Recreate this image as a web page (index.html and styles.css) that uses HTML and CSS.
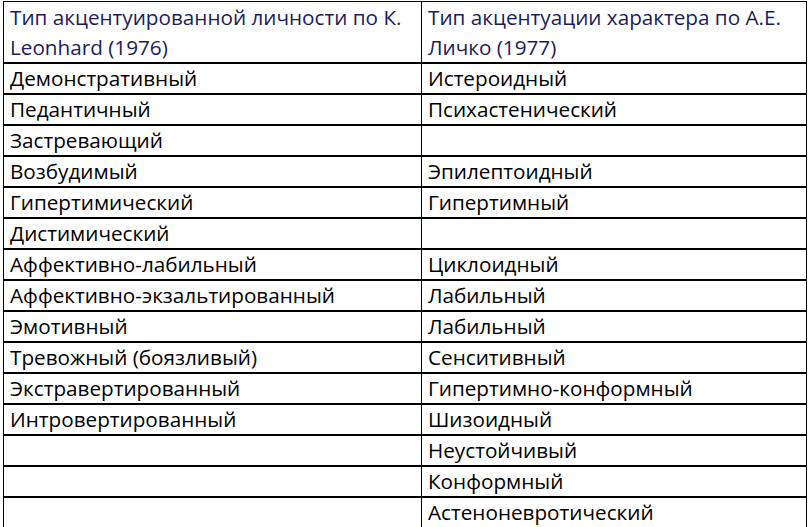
FILE: index.html
```html
<!DOCTYPE html>
<html lang="ru">
<head>
<meta charset="utf-8">
<link rel="stylesheet" href="styles.css">
</head>
<body>
<table class="types">
  <thead>
    <tr class="head">
      <th class="left">Тип акцентуированной личности по К. Leonhard (1976)</th>
      <th class="right">Тип акцентуации характера по А.Е. Личко (1977)</th>
    </tr>
  </thead>
  <tbody>
    <tr><td>Демонстративный</td><td>Истероидный</td></tr>
    <tr><td>Педантичный</td><td>Психастенический</td></tr>
    <tr><td>Застревающий</td><td></td></tr>
    <tr><td>Возбудимый</td><td>Эпилептоидный</td></tr>
    <tr><td>Гипертимический</td><td>Гипертимный</td></tr>
    <tr><td>Дистимический</td><td></td></tr>
    <tr><td>Аффективно-лабильный</td><td>Циклоидный</td></tr>
    <tr><td>Аффективно-экзальтированный</td><td>Лабильный</td></tr>
    <tr><td>Эмотивный</td><td>Лабильный</td></tr>
    <tr><td>Тревожный (боязливый)</td><td>Сенситивный</td></tr>
    <tr><td>Экстравертированный</td><td>Гипертимно-конформный</td></tr>
    <tr><td>Интровертированный</td><td>Шизоидный</td></tr>
    <tr><td></td><td>Неустойчивый</td></tr>
    <tr><td></td><td>Конформный</td></tr>
    <tr class="last"><td></td><td>Астеноневротический</td></tr>
  </tbody>
</table>
</body>
</html>
```

FILE: styles.css
```css
html, body {
  margin: 0;
  padding: 0;
  background: #ffffff;
}

body {
  padding: 1px 0 0 3px;
  font-family: "Open Sans", "Noto Sans", sans-serif;
  font-size: 20.7px;
  color: #000000;
}

.types {
  border-collapse: collapse;
  width: 804px;
  table-layout: fixed;
}

.types th,
.types td {
  border: 1px solid #000;
  border-top: 2px solid #000;
  padding: 0 6px 1px;
  text-align: left;
  vertical-align: middle;
  font-weight: normal;
  height: 28px;
  line-height: 28px;
  white-space: nowrap;
  overflow: hidden;
}

.types th.left,
.types td:first-child {
  width: 405px;
}

.types .head th {
  border-top: 1px solid #000;
  color: #1c1c5c;
  white-space: normal;
  height: 59px;
  line-height: 30px;
  padding-top: 0;
  padding-bottom: 0;
}

.types .last td {
  border-bottom: 1px solid #000;
  height: 26px;
}
```
